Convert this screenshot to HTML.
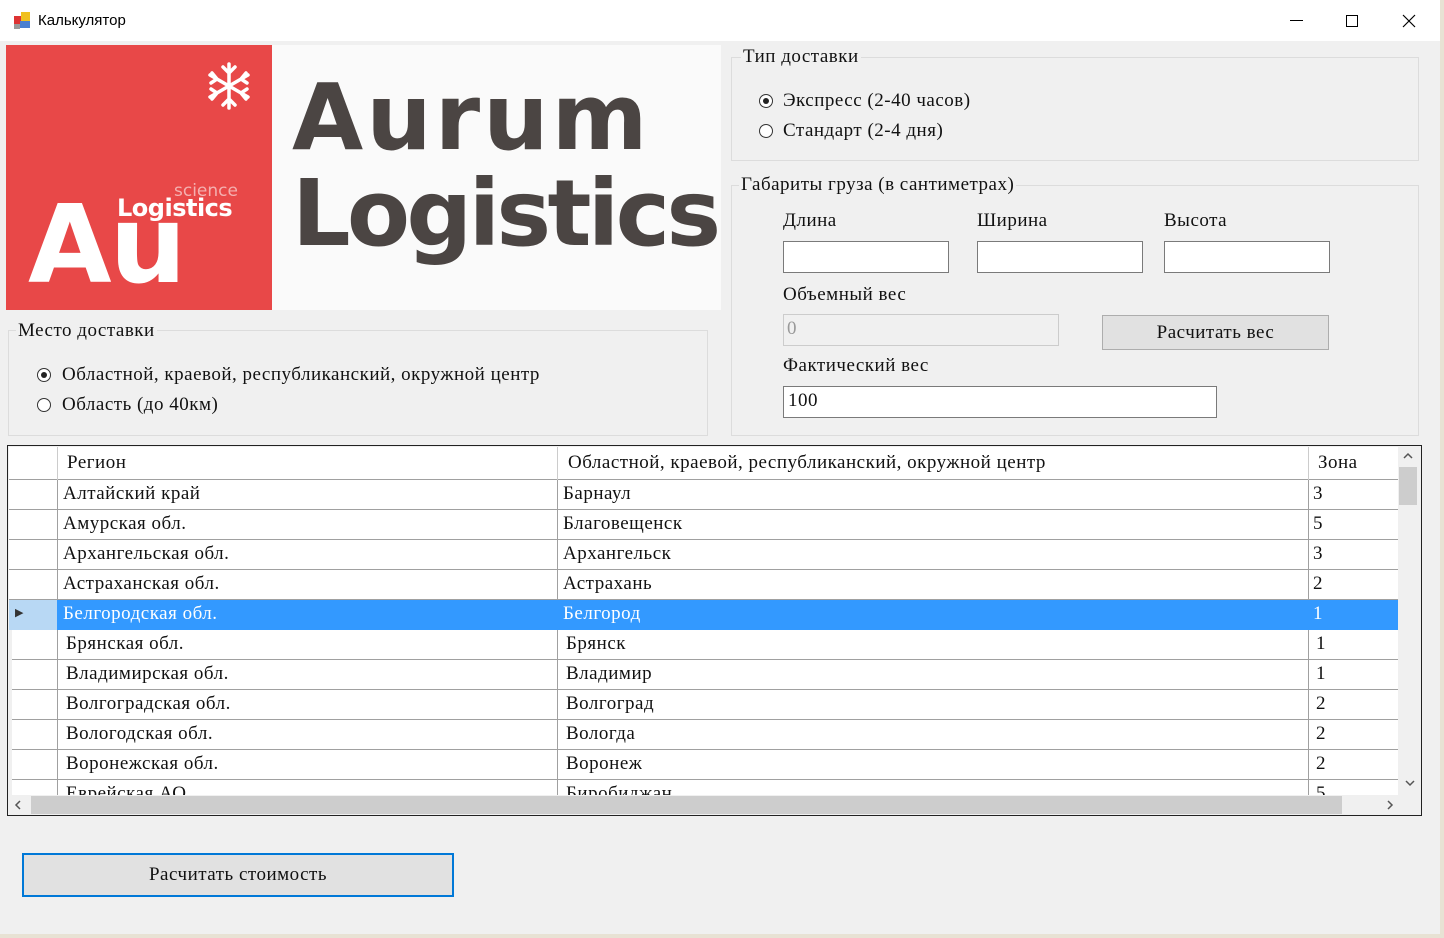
<!DOCTYPE html>
<html><head><meta charset="utf-8"><style>
*{margin:0;padding:0;box-sizing:border-box}
body{width:1444px;height:938px;background:#f0f0f0;position:relative;overflow:hidden;font-family:"Liberation Serif","DejaVu Serif",serif;font-size:19px;letter-spacing:0.5px;color:#111}
.a{position:absolute;white-space:nowrap}
.grp{position:absolute;border:1px solid #dcdcdc}
.inp{position:absolute;background:#fff;border:1px solid #7a7a7a}
.rad{position:absolute;width:14px;height:14px;border:1px solid #333;border-radius:50%;background:#fff}
.rad.on::after{content:"";position:absolute;left:3px;top:3px;width:6px;height:6px;border-radius:50%;background:#222}
.row{position:absolute;left:9px;width:1389px;height:30px;border-bottom:1px solid #a0a0a0;background:#fff}
.row div{position:absolute;top:3px;white-space:nowrap}
.vl{position:absolute;top:0;height:30px;width:1px;background:#a0a0a0}
</style></head><body>
<div class="a" style="left:0;top:0;width:1440px;height:41px;background:#fff"></div>
<div class="a" style="left:1440px;top:0;width:4px;height:938px;background:#e8e2d4"></div>
<svg class="a" style="left:14px;top:12px" width="18" height="18"><rect x="0" y="4" width="8" height="8" fill="#d33"/><rect x="7" y="0" width="9" height="9" fill="#f0c020"/><rect x="6" y="9" width="10" height="7" fill="#4a7fd0"/><rect x="0" y="12" width="6" height="5" fill="#999"/></svg>
<div class="a" style="left:38px;top:12px;font-family:'Liberation Sans',sans-serif;font-size:15px;letter-spacing:0;color:#000">Калькулятор</div>
<div class="a" style="left:1290px;top:20px;width:13px;height:1px;background:#000"></div>
<div class="a" style="left:1346px;top:15px;width:12px;height:12px;border:1px solid #000"></div>
<svg class="a" style="left:1402px;top:14px" width="14" height="14"><path d="M1 1L13 13M13 1L1 13" stroke="#000" stroke-width="1.2"/></svg>
<div class="a" style="left:6px;top:45px;width:266px;height:265px;background:#e84848"></div>
<div class="a" style="left:272px;top:45px;width:449px;height:265px;background:#fafafa"></div>
<svg class="a" style="left:204px;top:62px" width="50" height="48"><g stroke="#fff" stroke-width="3.5" fill="none" stroke-linecap="round"><path d="M25 2V46M6 13L44 35M44 13L6 35M19 5L25 11L31 5M19 43L25 37L31 43M7 21L13 17L8 11M43 27L37 31L42 37M43 21L37 17L42 11M7 27L13 31L8 37"/></g></svg>
<div class="a" style="left:28px;top:192px;font-family:'DejaVu Sans',sans-serif;font-weight:bold;font-size:108px;color:#fff;letter-spacing:-2px;line-height:1">Au</div>
<div class="a" style="left:115px;top:196px;font-family:'DejaVu Sans',sans-serif;font-weight:bold;font-size:24px;color:#fff;line-height:1;letter-spacing:-0.5px;background:#e84848;padding:0 2px">Logistics</div>
<div class="a" style="left:174px;top:183px;font-family:'DejaVu Sans',sans-serif;font-size:17px;color:#f4b0b0;letter-spacing:0;line-height:1">science</div>
<div class="a" style="left:292px;top:72px;font-family:'DejaVu Sans',sans-serif;font-weight:bold;font-size:92px;color:#4b4543;line-height:1;letter-spacing:3px">Aurum</div>
<div class="a" style="left:292px;top:168px;font-family:'DejaVu Sans',sans-serif;font-weight:bold;font-size:92px;color:#4b4543;line-height:1;letter-spacing:-3.7px">Logistics</div>
<div class="grp" style="left:8px;top:330px;width:700px;height:106px"></div>
<div class="a" style="left:16px;top:320px;background:#f0f0f0;padding:0 2px">Место доставки</div>
<div class="rad on" style="left:37px;top:368px"></div>
<div class="a" style="left:62px;top:364px">Областной, краевой, республиканский, окружной центр</div>
<div class="rad" style="left:37px;top:398px"></div>
<div class="a" style="left:62px;top:394px">Область (до 40км)</div>
<div class="grp" style="left:731px;top:57px;width:688px;height:104px"></div>
<div class="a" style="left:741px;top:46px;background:#f0f0f0;padding:0 2px">Тип доставки</div>
<div class="rad on" style="left:759px;top:94px"></div>
<div class="a" style="left:783px;top:90px">Экспресс (2-40 часов)</div>
<div class="rad" style="left:759px;top:124px"></div>
<div class="a" style="left:783px;top:120px">Стандарт (2-4 дня)</div>
<div class="grp" style="left:731px;top:185px;width:688px;height:251px"></div>
<div class="a" style="left:739px;top:174px;background:#f0f0f0;padding:0 2px">Габариты груза (в сантиметрах)</div>
<div class="a" style="left:783px;top:210px">Длина</div>
<div class="a" style="left:977px;top:210px">Ширина</div>
<div class="a" style="left:1164px;top:210px">Высота</div>
<div class="inp" style="left:783px;top:241px;width:166px;height:32px"></div>
<div class="inp" style="left:977px;top:241px;width:166px;height:32px"></div>
<div class="inp" style="left:1164px;top:241px;width:166px;height:32px"></div>
<div class="a" style="left:783px;top:284px">Объемный вес</div>
<div class="inp" style="left:783px;top:314px;width:276px;height:32px;background:#f0f0f0;border-color:#ccc;color:#999;padding:3px 3px">0</div>
<div class="a" style="left:1102px;top:315px;width:227px;height:35px;background:#e1e1e1;border:1px solid #adadad;text-align:center;line-height:33px">Расчитать вес</div>
<div class="a" style="left:783px;top:355px">Фактический вес</div>
<div class="inp" style="left:783px;top:386px;width:434px;height:32px;padding:3px 4px">100</div>
<div class="a" style="left:7px;top:445px;width:1415px;height:371px;border:1px solid #222;background:#f0f0f0"></div>
<div class="a" style="left:9px;top:447px;width:1389px;height:33px;background:#fff;border-bottom:1px solid #a0a0a0"></div>
<div class="a" style="left:57px;top:447px;width:1px;height:33px;background:#ccc"></div>
<div class="a" style="left:557px;top:447px;width:1px;height:33px;background:#ccc"></div>
<div class="a" style="left:1308px;top:447px;width:1px;height:33px;background:#ccc"></div>
<div class="a" style="left:67px;top:452px">Регион</div>
<div class="a" style="left:568px;top:452px">Областной, краевой, республиканский, окружной центр</div>
<div class="a" style="left:1318px;top:452px">Зона</div>
<div class="row" style="top:480px"><span class="vl" style="left:48px"></span><span class="vl" style="left:548px"></span><span class="vl" style="left:1299px"></span><div style="left:54px">Алтайский край</div><div style="left:554px">Барнаул</div><div style="left:1304px">3</div></div>
<div class="row" style="top:510px"><span class="vl" style="left:48px"></span><span class="vl" style="left:548px"></span><span class="vl" style="left:1299px"></span><div style="left:54px">Амурская обл.</div><div style="left:554px">Благовещенск</div><div style="left:1304px">5</div></div>
<div class="row" style="top:540px"><span class="vl" style="left:48px"></span><span class="vl" style="left:548px"></span><span class="vl" style="left:1299px"></span><div style="left:54px">Архангельская обл.</div><div style="left:554px">Архангельск</div><div style="left:1304px">3</div></div>
<div class="row" style="top:570px"><span class="vl" style="left:48px"></span><span class="vl" style="left:548px"></span><span class="vl" style="left:1299px"></span><div style="left:54px">Астраханская обл.</div><div style="left:554px">Астрахань</div><div style="left:1304px">2</div></div>
<div class="row" style="top:600px;background:#3399ff;color:#fff;border-bottom-color:#3399ff"><span style="position:absolute;left:0;top:0;width:48px;height:30px;background:#b8d8f4"></span><div style="left:6px;top:6px;color:#333;font-size:11px">▶</div><div style="left:54px">Белгородская обл.</div><div style="left:554px">Белгород</div><div style="left:1304px">1</div></div>
<div class="row" style="top:630px;left:12px;width:1388px"><span class="vl" style="left:45px"></span><span class="vl" style="left:545px"></span><span class="vl" style="left:1296px"></span><div style="left:54px">Брянская обл.</div><div style="left:554px">Брянск</div><div style="left:1304px">1</div></div>
<div class="row" style="top:660px;left:12px;width:1388px"><span class="vl" style="left:45px"></span><span class="vl" style="left:545px"></span><span class="vl" style="left:1296px"></span><div style="left:54px">Владимирская обл.</div><div style="left:554px">Владимир</div><div style="left:1304px">1</div></div>
<div class="row" style="top:690px;left:12px;width:1388px"><span class="vl" style="left:45px"></span><span class="vl" style="left:545px"></span><span class="vl" style="left:1296px"></span><div style="left:54px">Волгоградская обл.</div><div style="left:554px">Волгоград</div><div style="left:1304px">2</div></div>
<div class="row" style="top:720px;left:12px;width:1388px"><span class="vl" style="left:45px"></span><span class="vl" style="left:545px"></span><span class="vl" style="left:1296px"></span><div style="left:54px">Вологодская обл.</div><div style="left:554px">Вологда</div><div style="left:1304px">2</div></div>
<div class="row" style="top:750px;left:12px;width:1388px"><span class="vl" style="left:45px"></span><span class="vl" style="left:545px"></span><span class="vl" style="left:1296px"></span><div style="left:54px">Воронежская обл.</div><div style="left:554px">Воронеж</div><div style="left:1304px">2</div></div>
<div class="row" style="top:780px;left:12px;width:1388px;height:15px;overflow:hidden;border:none"><span class="vl" style="left:45px"></span><span class="vl" style="left:545px"></span><span class="vl" style="left:1296px"></span><div style="left:54px">Еврейская АО</div><div style="left:554px">Биробиджан</div><div style="left:1304px">5</div></div>
<div class="a" style="left:1398px;top:447px;width:20px;height:348px;background:#f0f0f0"></div>
<div class="a" style="left:1399px;top:467px;width:18px;height:38px;background:#cdcdcd"></div>
<svg class="a" style="left:1402px;top:452px" width="12" height="8"><path d="M2 6L6 2L10 6" stroke="#555" stroke-width="1.5" fill="none"/></svg>
<svg class="a" style="left:1404px;top:779px" width="12" height="8"><path d="M2 2L6 6L10 2" stroke="#555" stroke-width="1.5" fill="none"/></svg>
<div class="a" style="left:9px;top:795px;width:1409px;height:20px;background:#f0f0f0"></div>
<div class="a" style="left:31px;top:796px;width:1311px;height:18px;background:#cdcdcd"></div>
<svg class="a" style="left:14px;top:799px" width="8" height="12"><path d="M6 2L2 6L6 10" stroke="#555" stroke-width="1.5" fill="none"/></svg>
<svg class="a" style="left:1386px;top:799px" width="8" height="12"><path d="M2 2L6 6L2 10" stroke="#555" stroke-width="1.5" fill="none"/></svg>
<div class="a" style="left:22px;top:853px;width:432px;height:44px;background:#e1e1e1;border:2px solid #0078d7;text-align:center;line-height:40px">Расчитать стоимость</div>
<div class="a" style="left:0;top:934px;width:1444px;height:4px;background:#e8e2d4"></div>
</body></html>
